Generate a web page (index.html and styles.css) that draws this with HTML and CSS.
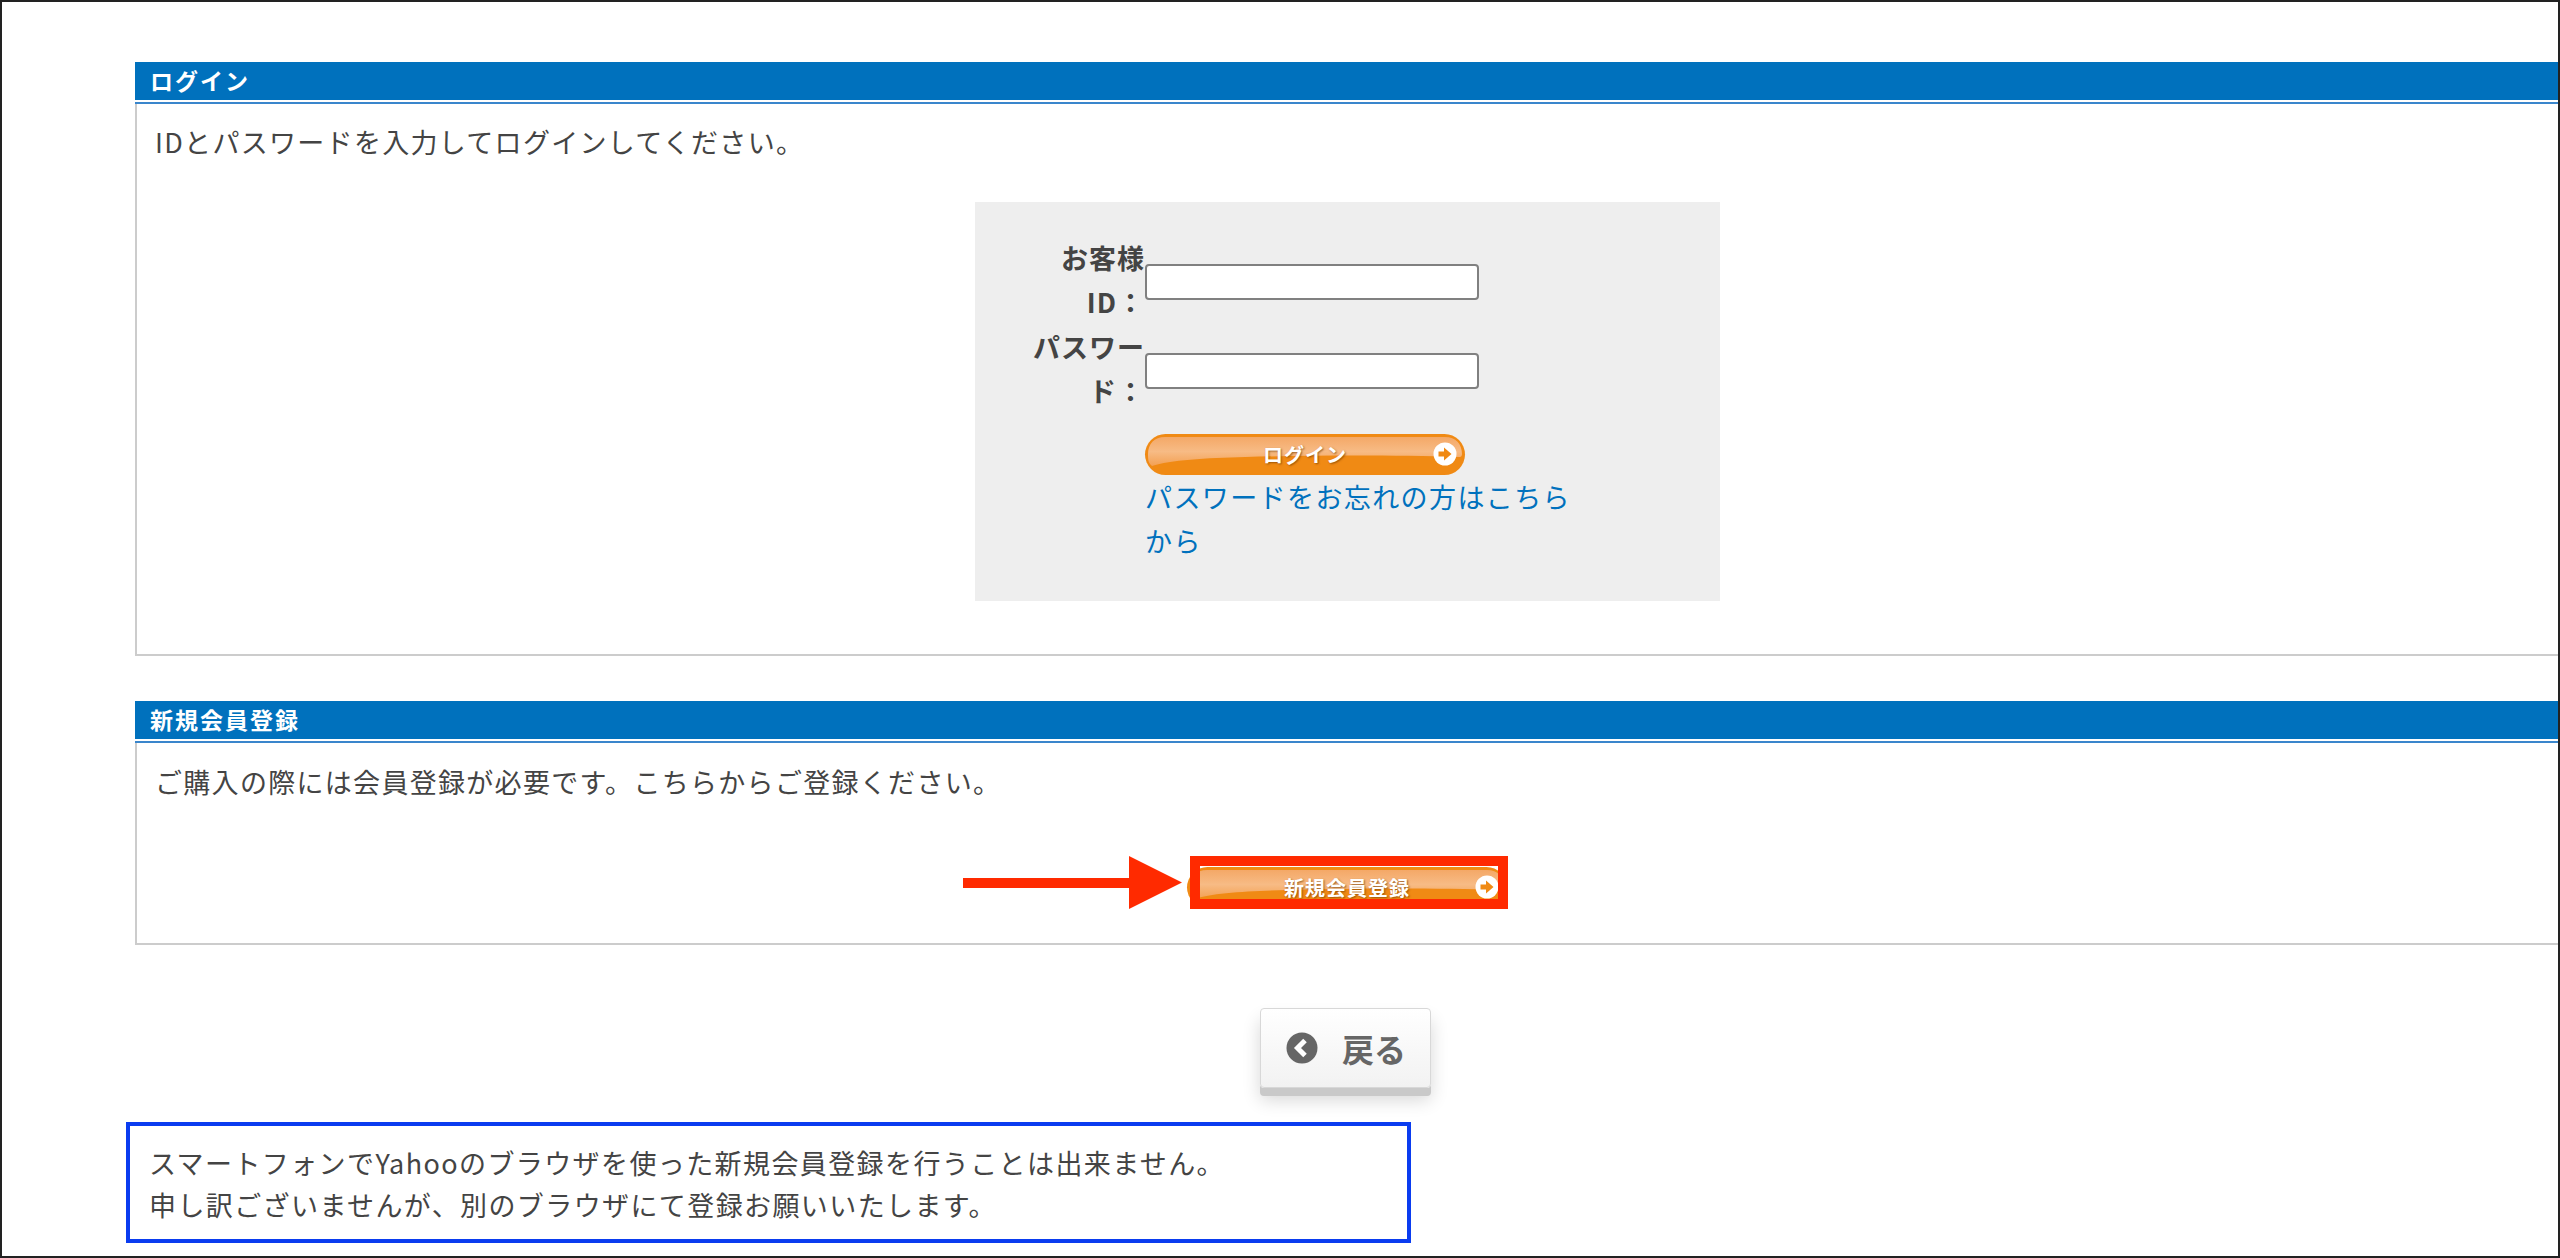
FILE: index.html
```html
<!DOCTYPE html>
<html lang="ja">
<head>
<meta charset="utf-8">
<title>ログイン</title>
<link rel="stylesheet" href="styles.css">
</head>
<body>
<div class="frame">
  <section class="section section-login">
    <h2 class="section-title">ログイン</h2>
    <div class="section-body">
      <p class="lead">IDとパスワードを入力してログインしてください。</p>
      <form class="panel">
        <div class="fields">
          <label class="field-label" for="uid">お客様ID：</label>
          <input class="field-input" id="uid" type="text">
          <label class="field-label" for="pw">パスワード：</label>
          <input class="field-input" id="pw" type="password">
        </div>
        <div class="actions">
          <a class="pill" href="#">
            <svg class="pill-gloss" viewBox="0 0 319 41" preserveAspectRatio="none"><defs><linearGradient id="gloss-a" x1="0" y1="0" x2="0" y2="1"><stop offset="0" stop-color="#f4a867"/><stop offset=".5" stop-color="#f7bb85"/><stop offset="1" stop-color="#f3a052"/></linearGradient></defs><path fill="url(#gloss-a)" d="M20 3H299C310 3 316 10 316 20C316 22 315 23 314 23C250 21 170 21 100 23C60 24 25 26 7 32C3 29 3 25 3 20C3 10 9 3 20 3Z"/></svg>
            <span class="pill-label">ログイン</span>
            <svg class="pill-arrow" viewBox="0 0 24 24"><circle cx="12" cy="12" r="11.5" fill="#fff"/><path d="M5.5 9.5H11V5.5L18.5 12L11 18.5V14.5H5.5Z" fill="#f08a14"/></svg>
          </a>
          <a class="forgot" href="#">パスワードをお忘れの方はこちらから</a>
        </div>
      </form>
    </div>
  </section>

  <section class="section section-register">
    <h2 class="section-title">新規会員登録</h2>
    <div class="section-body">
      <p class="lead">ご購入の際には会員登録が必要です。こちらからご登録ください。</p>
      <div class="register">
        <a class="pill" href="#">
          <svg class="pill-gloss" viewBox="0 0 319 41" preserveAspectRatio="none"><defs><linearGradient id="gloss-b" x1="0" y1="0" x2="0" y2="1"><stop offset="0" stop-color="#f4a867"/><stop offset=".5" stop-color="#f7bb85"/><stop offset="1" stop-color="#f3a052"/></linearGradient></defs><path fill="url(#gloss-b)" d="M20 3H299C310 3 316 10 316 20C316 22 315 23 314 23C250 21 170 21 100 23C60 24 25 26 7 32C3 29 3 25 3 20C3 10 9 3 20 3Z"/></svg>
          <span class="pill-label">新規会員登録</span>
          <svg class="pill-arrow" viewBox="0 0 24 24"><circle cx="12" cy="12" r="11.5" fill="#fff"/><path d="M5.5 9.5H11V5.5L18.5 12L11 18.5V14.5H5.5Z" fill="#f08a14"/></svg>
        </a>
        <span class="red-frame"></span>
        <svg class="red-arrow" viewBox="0 0 219 53"><path d="M0 22H166V0L219 26.5L166 53V32H0Z"/></svg>
      </div>
    </div>
  </section>

  <div class="back-row">
    <a class="back" href="#">
      <svg class="back-icon" viewBox="0 0 32 32"><circle cx="16" cy="16" r="15.5" fill="#666"/><path d="M19 8.5L11.5 16L19 23.5" fill="none" stroke="#fff" stroke-width="5"/></svg>
      <span>戻る</span>
    </a>
  </div>

  <div class="notice">
    <p>スマートフォンでYahooのブラウザを使った新規会員登録を行うことは出来ません。</p>
    <p>申し訳ございませんが、別のブラウザにて登録お願いいたします。</p>
  </div>
</div>
</body>
</html>
```

FILE: styles.css
```css
* { box-sizing: border-box; }
html, body { margin: 0; padding: 0; background: #fff; }
body {
  font-family: "Noto Sans CJK JP", "Noto Sans", sans-serif;
  font-size: 27px;
  color: #444;
}
.frame {
  width: 2560px;
  height: 1258px;
  border: 2px solid #222;
  overflow: hidden;
  padding-top: 60px;
}
.section { margin: 0 -2px 0 133px; }
.section-register { margin-top: 45px; }
.section-title {
  margin: 0;
  height: 42px;
  padding-left: 15px;
  background: #0071bd;
  border-bottom: 2px solid #3a86cc;
  box-shadow: inset 0 -2px 0 #fff;
  color: #fff;
  font-size: 23px;
  font-weight: 700;
  line-height: 36px;
  letter-spacing: 2px;
}
.section-body {
  border-left: 2px solid #ccc;
  border-bottom: 2px solid #ccc;
}
.section-login .section-body { padding: 16px 0 53px; }
.section-register .section-body { padding: 17px 0 34px; }
.lead {
  margin: 0 0 0 18px;
  line-height: 44px;
  letter-spacing: 1.3px;
}
.section-login .lead { margin-bottom: 38px; }
.panel {
  width: 745px;
  margin: 0 auto;
  padding: 34px 0 38px 54px;
  background: #eee;
  position: relative;
  left: -1px;
}
.fields {
  display: grid;
  grid-template-columns: 116px 334px;
  row-gap: 1px;
  align-items: center;
}
.field-label {
  text-align: right;
  font-weight: 700;
  line-height: 44px;
  letter-spacing: 1px;
}
.field-input {
  width: 334px;
  height: 36px;
  margin-top: 4px;
  padding: 0 4px;
  background: #fff;
  border: 2px solid #808080;
  border-radius: 4px;
}
.actions {
  width: 430px;
  margin: 21px 0 0 116px;
}
.pill {
  position: relative;
  display: flex;
  align-items: center;
  justify-content: center;
  width: 320px;
  height: 41px;
  border-radius: 21px;
  background: #f08a14;
  text-decoration: none;
}
.pill-gloss {
  position: absolute;
  inset: 0;
  width: 100%;
  height: 100%;
}
.pill-label {
  position: relative;
  color: #fff;
  font-size: 20px;
  font-weight: 700;
  line-height: 41px;
  letter-spacing: 1px;
  text-shadow: 1px 1px 2px rgba(120, 60, 0, .7);
}
.pill-arrow {
  position: absolute;
  top: 8px;
  right: 8px;
  width: 24px;
  height: 24px;
}
.forgot {
  display: block;
  color: #0071bd;
  line-height: 44px;
  letter-spacing: 1.4px;
  text-decoration: none;
}
.register {
  position: relative;
  width: 321px;
  height: 53px;
  margin: 52px auto 0;
  padding-top: 11px;
  left: -1px;
}
.red-frame {
  position: absolute;
  top: 0;
  left: 3px;
  right: 0;
  bottom: 0;
  border: 10px solid #ff2a00;
}
.red-arrow {
  position: absolute;
  top: 0;
  left: -224px;
  width: 219px;
  height: 53px;
  fill: #ff2a00;
}
.back-row {
  display: flex;
  justify-content: center;
  margin: 63px 0 0 135px;
  position: relative;
  left: -2px;
}
.back {
  display: flex;
  align-items: center;
  gap: 24px;
  width: 171px;
  height: 80px;
  padding-left: 25px;
  background: linear-gradient(#fff, #f2f2f2);
  border: 1px solid #d8d8d8;
  border-radius: 4px;
  box-shadow: 0 8px 0 #c9c9c9, 0 12px 18px rgba(0, 0, 0, .16);
  color: #666;
  font-size: 32px;
  font-weight: 700;
  text-decoration: none;
}
.back-icon { width: 32px; height: 32px; flex: none; }
.notice {
  width: 1285px;
  height: 121px;
  margin: 34px 0 0 124px;
  padding: 16px 0 0 19px;
  border: 4px solid #0a3cf0;
  line-height: 42px;
  letter-spacing: 1.4px;
}
.notice p { margin: 0; }
```
